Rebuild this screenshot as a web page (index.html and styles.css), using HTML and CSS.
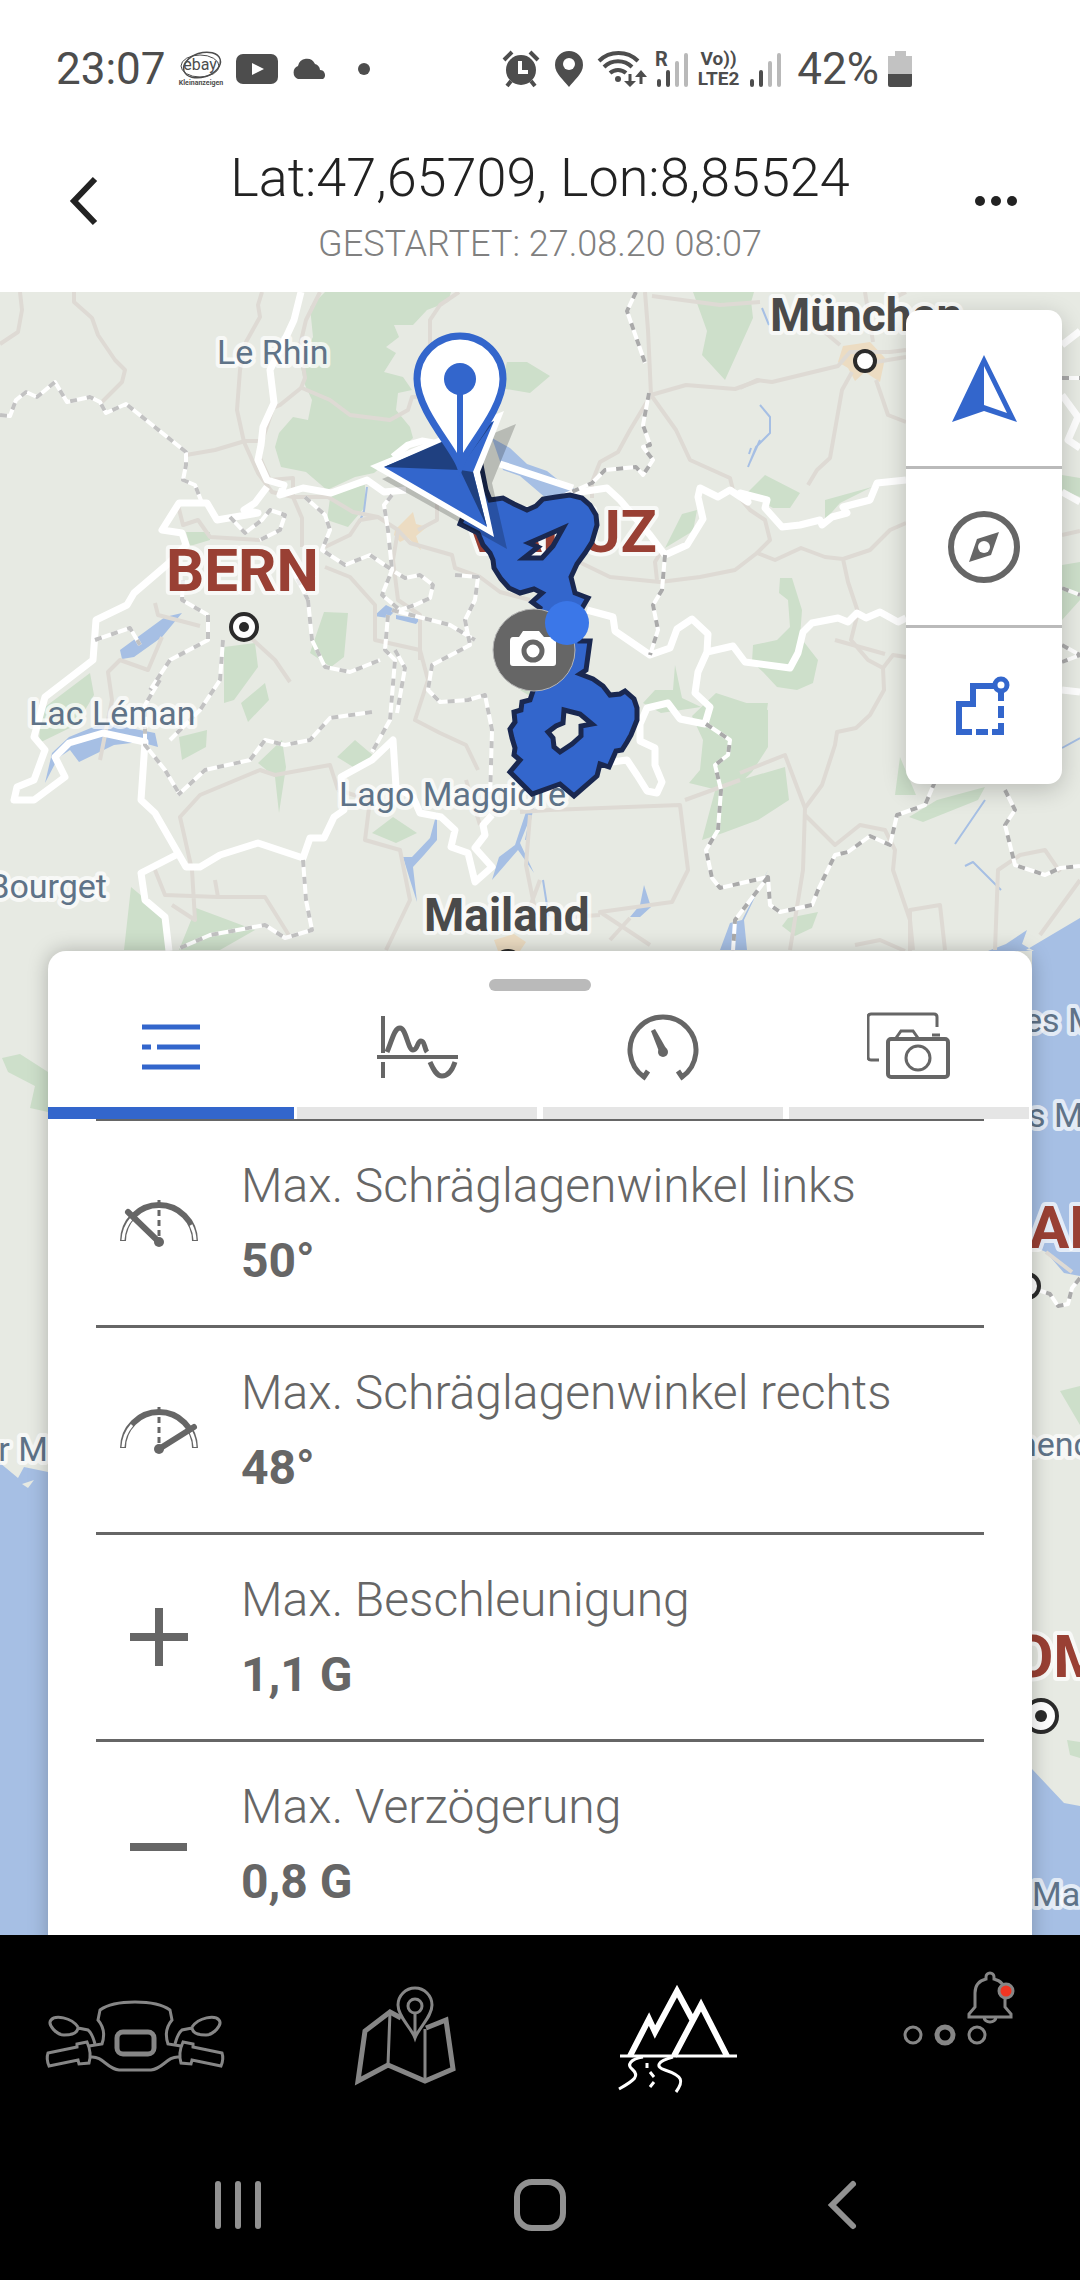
FILE: index.html
```html
<!DOCTYPE html>
<html lang="de">
<head>
<meta charset="UTF-8" />
<meta name="viewport" content="width=device-width, initial-scale=1" />
<title>Aufgezeichnete Tour</title>
<link rel="stylesheet" href="styles.css">
</head>
<body>

  <!-- Statusleiste -->
  <div class="status-bar">
    <div class="status-left">
      <span class="status-text">23:07</span>
      <svg class="ic-ebay" viewBox="0 0 44 36" width="44" height="36">
        <ellipse cx="23" cy="14" rx="19" ry="12" transform="rotate(-18 23 14)" fill="none" stroke="#4d4d4d" stroke-width="1.5"/>
        <ellipse cx="21" cy="15" rx="19" ry="11" fill="none" stroke="#4d4d4d" stroke-width="1"/>
        <text x="21" y="19" text-anchor="middle" font-size="16">ebay</text>
        <text x="22" y="34" text-anchor="middle" font-size="7" font-weight="700">Kleinanzeigen</text>
      </svg>
      <svg viewBox="0 0 42 30" width="42" height="30">
        <rect width="42" height="30" rx="7" fill="#4d4d4d"/>
        <path d="M16 9l12 6-12 6z" fill="#fff"/>
      </svg>
      <svg class="ic-cloud" viewBox="0 0 38 22" width="38" height="22">
        <path d="M7 21a7 7 0 0 1 0-13A9 9 0 0 1 24 6a7 7 0 0 1 5 6 5 5 0 0 1 3 9z" fill="#4d4d4d"/>
      </svg>
      <span class="status-dot"></span>
    </div>
    <div class="status-right">
      <svg viewBox="0 0 38 38" width="38" height="38">
        <circle cx="19" cy="20" r="15" fill="#4d4d4d"/>
        <path d="M2 10l8-8M28 2l8 8M9 31l-4 5M29 31l4 5" stroke="#4d4d4d" stroke-width="4" fill="none"/>
        <path d="M18 11v11h8" stroke="#fff" stroke-width="4" fill="none"/>
      </svg>
      <svg class="ic-place" viewBox="0 0 28 38" width="28" height="38">
        <path d="M14 1A14 14 0 0 0 0 15c0 9 9 15 14 22 5-7 14-13 14-22A14 14 0 0 0 14 1z" fill="#4d4d4d"/>
        <circle cx="14" cy="14" r="6" fill="#fff"/>
      </svg>
      <svg class="ic-wifi" viewBox="0 0 48 38" width="48" height="38">
        <g fill="none" stroke="#4d4d4d" stroke-width="4">
          <path d="M1 11a28 28 0 0 1 39 0M6 17a20 20 0 0 1 28 0M12 23a12 12 0 0 1 16 0"/>
          <path d="M32 24v9M43 34v-9" stroke-width="3"/>
        </g>
        <circle cx="20" cy="29" r="3" fill="#4d4d4d"/>
        <path d="M26 31h12l-6 6zM37 27h12l-6-7z" fill="#4d4d4d"/>
      </svg>
      <svg class="ic-signal" viewBox="0 0 34 38" width="34" height="38">
        <text x="0" y="16" font-size="20" font-weight="700">R</text>
        <g stroke-width="4" stroke-linecap="round">
          <path d="M4 31v4M13 22v13" stroke="#4d4d4d"/>
          <path d="M22 13v22M31 5v30" stroke="#b9b9b9"/>
        </g>
      </svg>
      <span class="volte"><span>Vo))</span><span>LTE2</span></span>
      <svg class="ic-signal" viewBox="0 0 34 38" width="34" height="38">
        <g stroke-width="4" stroke-linecap="round">
          <path d="M4 31v4M13 22v13" stroke="#4d4d4d"/>
          <path d="M22 13v22M31 5v30" stroke="#b9b9b9"/>
        </g>
      </svg>
      <span class="status-text percent">42%</span>
      <svg viewBox="0 0 24 38" width="24" height="38">
        <path d="M7 1h11v5h6v19H0V6h7z" fill="#c2c2c2"/>
        <path d="M0 24h24v11q0 2-2 2H2q-2 0-2-2z" fill="#4d4d4d"/>
      </svg>
    </div>
  </div>

  <!-- Kopfzeile -->
  <header class="header">
    <button class="header-btn" aria-label="Zurück">
      <svg viewBox="0 0 30 50" width="30" height="50">
        <path d="M26 3L5 25l21 22" fill="none" stroke="#222" stroke-width="6"/>
      </svg>
    </button>
    <div class="header-text">
      <h1>Lat:47,65709, Lon:8,85524</h1>
      <p>GESTARTET: 27.08.20 08:07</p>
    </div>
    <button class="header-btn" aria-label="Mehr">
      <svg viewBox="0 0 44 12" width="44" height="12">
        <g fill="#222"><circle cx="6" cy="6" r="5"/><circle cx="22" cy="6" r="5"/><circle cx="38" cy="6" r="5"/></g>
      </svg>
    </button>
  </header>

  <main class="stage">
    <!-- Karte -->
    <svg class="map" viewBox="0 292 1080 1643" preserveAspectRatio="xMidYMin slice" role="img" aria-label="Karte mit Tour">
      <g class="forest">
        <path d="M325 292H451L448 302 427 310 413 325H394L399 337 386 347 396 353 384 372 403 377 412 390 398 393 396 410 410 427 413 438 393 457 374 473 355 477 327 490 306 472 281 467 275 447 279 433 293 417 308 420 312 400 305 385 300 363 313 337 310 307z"/>
        <path d="M331 491L365 485V507L348 527 327 520zM324 612L348 613 344 657 331 667 310 653zM224 647L255 643 258 667 234 700 224 703zM90 673L41 710 39 743 76 725 94 695zM265 683L241 703 248 722 269 700z"/>
        <path d="M207 730L179 737 182 760 206 747zM282 740L258 763 275 777 279 813 286 767zM355 740L375 757 358 770 337 757zM393 817L417 833 396 843 372 833zM131 887L162 913 169 950H124zM196 908L255 930 220 950H179zM186 532h24v8l-20 6z"/>
        <path d="M716 693L768 710V747L752 772 730 793 689 783 700 770 703 740 692 716zM785 767L789 800 758 820 723 833 702 840 716 787zM675 665L682 698 701 707 661 713 643 703 655 690 673 690z"/>
        <path d="M780 578H792L802 610 800 637 818 660 813 683 797 690 777 687 763 672 752 662 753 645 777 640 790 627 788 600 779 593zM765 475L800 493 790 508H773L747 493zM872 487L825 500V520L840 503zM740 703H768L763 737 740 760zM788 918L818 912 812 928 795 936 782 926z"/>
        <path d="M985 787L937 800 909 817 923 822 978 800zM900 757L916 795H895zM693 292H750L753 318 725 380 702 355 707 331zM507 362H527L550 376 530 393 500 388zM682 514L697 510 693 531 665 548zM740 292h14l-14 48zM1062 475L1080 478V497L1062 490zM1062 565L1080 562V600L1062 620z"/>
        <path d="M2 1058L20 1054 48 1072V1112L30 1108 35 1086 8 1072zM1060 1391L1080 1386V1425zM1067 1740L1080 1742V1758L1070 1755zM520 690l10-6v12z"/>
      </g>
      <g class="city-area">
        <path d="M843 346L870 342 885 358 880 382 865 372 855 381 848 368 838 362zM395 530l18-18 3 12 11 3-11 9 5 14-13-12-8 4-6-7zM494 940l20-6 12 8-6 9h-22z"/>
      </g>
      <g class="water">
        <path d="M45 783L52 753 69 737 103 723 130 728 155 733 158 747 140 742 114 745 79 762 70 750 58 758zM182 613L165 617 120 650 122 659 134 657 162 637zM492 438L510 448 527 464 547 471 562 483 585 494 547 499 520 476 503 470z"/>
        <path d="M437 812V840L424 855 413 867 417 902 410 880 403 857 412 857 430 838zM534 808L520 843 534 873 518 850 492 880 499 857 515 845 526 812zM768 870L744 920 747 950H720L730 923 742 920zM644 885L651 907 640 917H630L640 905z"/>
        <path d="M386 605l10 5-8 8-14-2zM396 615l24 4-4 5-20-5zM418 624l4 3-2 16z"/>
        <path d="M1080 918L1026 950 1032 951V1246L1046 1252 1064 1273 1080 1276zM988 951L1006 944 1027 930 1022 944 1034 951zM0 1463L18 1478 24 1467 48 1472V1935H0zM1032 1769L1064 1803 1080 1806V1935H1032z"/>
      </g>
      <path d="M22 1484l12-4-6 8z" fill="#e7eae3"/>
      <g class="stream">
        <path d="M762 308l7 17M760 405l10 12v16l-14 14-8 20M751 448l-2 6M532 810l-6 30M367 487l-3 24-5 12M760 440l-10 22M543 880l6 38M1062 748l18-10M985 800l-30 44M965 866l8-4 28 28"/>
      </g>
      <g class="road">
        <path d="M20 292L22 310 18 332 0 344M74 292V302L92 318 98 335 115 360 125 370 122 382 101 403M262 292L258 305 260 317 246 342 240 370 237 410 244 442 258 473 272 492 293 497 302 518V547"/>
        <path d="M320 292L306 320 300 345 305 378 301 388 280 405 273 408 262 441 245 441 215 450 186 455M262 441L260 458 270 480 293 478V497L328 497 353 512 378 517 398 530 410 543 452 555 455 568 480 577 500 592 530 600"/>
        <path d="M302 388L330 400 350 415 390 420 408 410 412 397 425 396M459 292L440 305 430 320V360M437 500V520L418 530M378 517L360 520 350 535 325 547M325 567L350 577 375 605V640L420 650 428 680 415 720 440 733 466 745 478 770M398 530L393 560 398 600 420 615V660"/>
        <path d="M178 505L183 525 198 520 210 537 260 540M155 603L158 615 200 626M240 628L275 660 290 682M162 637L148 670 120 660 108 672 112 700 100 760M172 905L195 920 192 870 180 817 200 795 260 770 275 775 330 765 338 790M155 870L165 895 218 897 215 880M218 897L265 897 290 937M338 790L370 800 365 840 400 850 410 900 386 950"/>
        <path d="M645 292L648 330 651 395 630 430 618 452 600 462 592 482V498M651 395L686 385 735 389 760 380M651 395L676 430 690 460 730 478 733 490 750 510 765 520 770 540 757 553 775 560 801 548 825 557 843 559 870 550 890 530 906 523M843 559L848 582 858 612 851 640 868 660 883 668 884 690 870 715 856 728 837 732 835 745 822 785 805 808"/>
        <path d="M883 668L893 655 906 657M757 553L735 570 700 577 660 582 610 577 575 560M657 580L655 562 662 550M740 388L757 380 772 382 838 366 850 352 890 352 906 350M852 372L842 390 830 458 817 470 808 485M876 380L888 415 906 422M822 330L840 345M865 292L873 342M906 357L870 363M652 296L720 305 760 302M906 292l-12 6"/>
        <path d="M740 773L785 755 805 808 803 870 790 950M685 800L740 780M520 812L550 810 680 805 688 870 672 902 600 912 650 945M805 815L835 845 860 825 885 830 895 850 893 870 910 920 913 950M910 951V910L940 905 945 950M995 950L998 870 1020 855 1045 850 1060 872M1040 935L1080 880M855 945L880 940 905 951M835 640l50 14M1062 535l18-4M1046 1252l26 20M480 825L466 780M610 940l20-22M540 880L525 920 600 915M530 815l-4 50 10 50"/>
      </g>
      <g class="border">
        <path d="M301 292L294 320 288 333 270 370 274 403 263 427 261 445 258 460 267 480 284 485 280 495 303 488 331 493 367 480 384 492 406 490 M267 487L255 503 244 510 258 513 217 520 207 503H179L162 530 182 533 186 545 169 563 134 593 127 605 96 620 93 660 45 697 34 737 45 750 34 780 17 787 14 800 34 800 65 777 55 757 69 743 103 733 145 742 141 800 155 813 186 867H200L220 855 258 843 303 858 310 838H324L334 817 344 810 341 777 372 760 393 740 396 787 413 797 420 813 441 817 455 830 451 847 468 853 475 882 492 867 475 848 485 835 483 825 492 815M176 855L141 873 145 900 165 917 169 951"/>
        <path d="M393 457L408 445 422 441 445 445M500 464L573 488M573 493L607 488 620 500 650 535 665 555 687 545 703 519 698 497 700 488 718 497 730 490 748 502 740 493 767 500 765 508 782 527 800 525 820 520 822 525 832 517 847 513 843 507 870 500 877 483 906 480"/>
        <path d="M587 610L613 617 615 631 650 655 670 648 677 629 692 619 708 634 707 652 698 672 695 693 710 707 705 724 680 719 668 703 647 708 640 724V741L655 748V765L662 782 657 793 647 791 637 775 627 760 612 762M707 652L733 646 745 662 790 668 798 653 803 632 812 623 838 618 848 622 857 613 866 618 880 612 898 622 906 618M1062 345l18-14M1062 395L1078 417 1068 440 1080 448M1062 492L1080 502M1062 690L1080 692"/>
      </g>
      <path id="bezirke" class="dash-base" d="M0 415L10 416 16 400 26 392 37 397 55 382 67 402 90 397 100 402 106 413 126 404 186 452V465L183 480 195 485 202 503M392 495L384 505 388 530 392 570 382 595 400 610 415 605 430 598 433 585 420 575 405 578 395 572M305 497L325 515 330 530 322 550 345 565 370 555 392 570M230 517L245 533 262 520 270 510 285 515 280 530 260 540M455 575L478 577 475 600 465 620 470 645 432 665 428 690 440 702 468 700 485 695 492 730 490 800M388 615L385 650 395 660 390 720 372 752M308 600L312 640 325 667 350 672 380 660M308 600l-15-30M392 610L450 625 475 640M395 650l10 18-8 45M372 712L330 718 310 740 285 745 265 740 250 760 205 770 178 795M208 615V640L170 660 150 690M160 680L145 705 145 745 165 770 180 795M303 860L306 900 312 930 285 938 265 925 210 935 180 948M223 640L220 680 200 710 170 740M183 580L182 600 208 615M95 640L130 628 140 645"/>
      <path class="dash-mark" d="M0 415L10 416 16 400 26 392 37 397 55 382 67 402 90 397 100 402 106 413 126 404 186 452V465L183 480 195 485 202 503M392 495L384 505 388 530 392 570 382 595 400 610 415 605 430 598 433 585 420 575 405 578 395 572M305 497L325 515 330 530 322 550 345 565 370 555 392 570M230 517L245 533 262 520 270 510 285 515 280 530 260 540M455 575L478 577 475 600 465 620 470 645 432 665 428 690 440 702 468 700 485 695 492 730 490 800M388 615L385 650 395 660 390 720 372 752M308 600L312 640 325 667 350 672 380 660M308 600l-15-30M392 610L450 625 475 640M395 650l10 18-8 45M372 712L330 718 310 740 285 745 265 740 250 760 205 770 178 795M208 615V640L170 660 150 690M160 680L145 705 145 745 165 770 180 795M303 860L306 900 312 930 285 938 265 925 210 935 180 948M223 640L220 680 200 710 170 740M183 580L182 600 208 615M95 640L130 628 140 645"/>
      <path class="dash-base" d="M636 292L627 311 645 363M649 393L643 425 650 445 643 447 653 460 643 475 636 467 605 470 592 483 560 497M665 555L662 590 653 605 658 630 650 655M706 724L730 740 728 755 715 765 721 790 718 830 706 850 712 878 720 888 768 877 770 905 780 912 812 905 818 890 835 855 848 852 870 836 890 845 897 815 925 805 934 784 930 770M768 877L735 920 733 951M1005 790L1015 810 1005 825 1015 865 1045 875 1060 868 1080 866M1062 588L1080 595M1062 645L1080 655 1062 662M1062 378h18M1080 1278l-8 10-4 16-10 2-8-12-12-4"/>
      <path class="dash-mark dark" d="M636 292L627 311 645 363M649 393L643 425 650 445 643 447 653 460 643 475 636 467 605 470 592 483 560 497M665 555L662 590 653 605 658 630 650 655M706 724L730 740 728 755 715 765 721 790 718 830 706 850 712 878 720 888 768 877 770 905 780 912 812 905 818 890 835 855 848 852 870 836 890 845 897 815 925 805 934 784 930 770M768 877L735 920 733 951M1005 790L1015 810 1005 825 1015 865 1045 875 1060 868 1080 866M1062 588L1080 595M1062 645L1080 655 1062 662M1062 378h18M1080 1278l-8 10-4 16-10 2-8-12-12-4"/>

      <!-- Beschriftung -->
      <g class="label-water">
        <text x="217" y="364">Le Rhin</text>
        <text x="29" y="725">Lac Léman</text>
        <text x="339" y="806">Lago Maggiore</text>
        <text x="107" y="898" text-anchor="end">Bourget</text>
        <text x="48" y="1461" text-anchor="end">r M</text>
        <text x="1024" y="1032">es M</text>
        <text x="1028" y="1127">s M</text>
        <text x="1018" y="1456">henc</text>
        <text x="1032" y="1906">Ma</text>
      </g>
      <g class="label-city">
        <text x="770" y="331">München</text>
        <text x="424" y="931">Mailand</text>
      </g>
      <g class="label-capital">
        <text x="166" y="591">BERN</text>
        <text x="657" y="552" text-anchor="end">VADUZ</text>
        <text x="1029" y="1248">AN</text>
        <text x="1012" y="1677">OM</text>
      </g>
      <g class="town">
        <circle cx="244" cy="627" r="13"/><circle cx="865" cy="361" r="10"/><circle cx="508" cy="964" r="13"/>
        <circle cx="1027" cy="1286" r="12"/><circle cx="1041" cy="1716" r="16"/>
      </g>
      <circle cx="244" cy="627" r="5" fill="#2b2b2b"/>
      <circle cx="1041" cy="1716" r="6" fill="#2b2b2b"/>

      <!-- Tour -->
      <path class="track" d="M482 470L486 490 490 500 503 498 514 504 527 510 536 506 543 499 556 497 570 495 582 498 590 505 596 515 597 525 592 542 585 553 577 564 571 577 575 593 588 598 581 610 580 641 590 641 586 670 580 674 593 679 603 686 610 695 620 694 625 691 634 699 637 708 637 720 631 735 627 742 622 750 616 751 609 767 600 764 597 776 574 796 560 784 532 794 510 772 520 760 514 755 515 748 512 738 510 729 515 722 514 712 521 710 522 702 530 700 533 691 527 651 540 608 532 602 542 593 534 589 520 593 509 588 501 579 494 568 493 560 490 553 483 545 478 533 460 524zM524 558L538 547 529 543 545 536 563 528 553 546 542 558zM564 710L580 714 592 724 581 726V736L572 744 560 752 554 747 553 738 548 732 556 726 563 723z"/>

      <!-- Aktuelle Position -->
      <path d="M382 479L516 424 492 483 507 549z" fill="#000" opacity=".2"/>
      <path d="M370 466L504 411 480 472 494 537z" fill="#fff"/>
      <path d="M384 467L494 421 473 472 487 527z" fill="#3366cc"/>
      <path d="M384 467L446 440 460 470zM460 470L473 472 487 527zM494 421L486 428 462 465z" fill="#1f4080"/>
      <path d="M460 466C453 447 417 410 417 379A43 43 0 0 1 503 379C503 410 467 447 460 466z" fill="#fff" stroke="#3366cc" stroke-width="7"/>
      <path d="M460 379v86" stroke="#3366cc" stroke-width="6"/>
      <circle cx="460" cy="379" r="16" fill="#3366cc"/>

      <!-- Foto -->
      <circle cx="534" cy="650" r="41" fill="#666" stroke="#b5b5b5" stroke-width="1"/>
      <path d="M513 637h6l4-6h16l5 6h8q4 0 4 4v22q0 3-3 3h-40q-3 0-3-3v-22q0-4 3-4z" fill="#fff"/>
      <circle cx="533" cy="651" r="9" fill="#fff" stroke="#666" stroke-width="5"/>
      <circle cx="567" cy="623" r="22" fill="#3b77e8"/>
    </svg>

    <div class="controls">
      <button aria-label="Position">
        <svg class="icon" viewBox="0 0 84 84">
          <path fill-rule="evenodd" d="M42 9L75 76 42 65 10 76zM42 20V59L65 67z" fill="#3366cc"/>
        </svg>
      </button>
      <button aria-label="Kompass">
        <svg class="icon" viewBox="0 0 84 84">
          <circle cx="42" cy="42" r="33" fill="none" stroke="#666" stroke-width="6"/>
          <path d="M57 27L49 50 27 57 35 34z" fill="#666"/>
          <circle cx="42" cy="42" r="6" fill="#fff"/>
        </svg>
      </button>
      <button aria-label="Route">
        <svg class="icon" viewBox="0 0 84 84" fill="none" stroke="#3366cc" stroke-width="6">
          <path d="M53 22H31V40H17V68H30M34 68H46M50 68H59V59M59 54V42M59 37V28"/>
          <circle cx="59" cy="21" r="6" stroke-width="5"/>
        </svg>
      </button>
    </div>

    <section class="sheet">
      <div class="handle"></div>
      <div class="tabs" role="tablist">
        <button class="tab active" role="tab" aria-selected="true" aria-label="Liste">
          <svg class="icon" viewBox="0 0 84 84" fill="none" stroke="#3366cc" stroke-width="5">
            <path d="M13 22H71M13 42H22M28 42H71M13 62H71"/>
          </svg>
        </button>
        <button class="tab" role="tab" aria-selected="false" aria-label="Verlauf">
          <svg class="icon" viewBox="0 0 84 84" fill="none" stroke="#666">
            <path d="M8 11V48M8 57V73M2 52H83" stroke-width="4"/>
            <path d="M12 47C17 36 19 23 25 23S33 45 38 45 42 36 46 36 49 43 52 47M55 57C59 66 62 71 67 71S77 66 80 57" stroke-width="5"/>
          </svg>
        </button>
        <button class="tab" role="tab" aria-selected="false" aria-label="Instrumente">
          <svg class="icon" viewBox="0 0 84 84" fill="none" stroke="#666">
            <path d="M27 66L23 72A33 33 0 1 1 61 72L57 66" stroke-width="5"/>
            <path d="M30 26L34 24 46 45 39 49z" fill="#666" stroke="none"/>
            <circle cx="42" cy="47" r="5" fill="#666" stroke="none"/>
          </svg>
        </button>
        <button class="tab" role="tab" aria-selected="false" aria-label="Fotos">
          <svg class="icon" viewBox="0 0 84 84" fill="none" stroke="#666">
            <path d="M12 55H4Q1 55 1 52V12Q1 9 4 9H67Q70 9 70 12V22" stroke-width="3"/>
            <rect x="21" y="34" width="60" height="38" rx="3" stroke-width="4"/>
            <path d="M29 33L34 26H46L51 33M65 30H73" stroke-width="3"/>
            <circle cx="51" cy="53" r="12" stroke-width="3"/>
          </svg>
        </button>
      </div>

      <ul class="stats">
        <li>
          <svg class="icon" viewBox="0 0 84 84" fill="none" stroke="#666">
            <path d="M6 60A36 36 0 0 1 78 60" stroke-width="6"/>
            <path d="M6 59A36 36 0 0 1 15 37M74 44A36 36 0 0 1 78 59" stroke="#fff" stroke-width="3"/>
            <path d="M42 19V58" stroke-width="3" stroke-dasharray="6 4"/>
            <path d="M42 61L11 31" stroke-width="6" stroke-linecap="round"/>
            <circle cx="42" cy="61" r="5" fill="#666" stroke="none"/>
          </svg>
          <div><span>Max. Schräglagenwinkel links</span><strong>50°</strong></div>
        </li>
        <li>
          <svg class="icon" viewBox="0 0 84 84" fill="none" stroke="#666">
            <path d="M6 60A36 36 0 0 1 78 60" stroke-width="6"/>
            <path d="M6 59A36 36 0 0 1 15 37M74 44A36 36 0 0 1 78 59" stroke="#fff" stroke-width="3"/>
            <path d="M42 19V58" stroke-width="3" stroke-dasharray="6 4"/>
            <path d="M42 61L77 39" stroke-width="6" stroke-linecap="round"/>
            <circle cx="42" cy="61" r="5" fill="#666" stroke="none"/>
          </svg>
          <div><span>Max. Schräglagenwinkel rechts</span><strong>48°</strong></div>
        </li>
        <li>
          <svg class="icon" viewBox="0 0 84 84"><path d="M13 42H71M42 13V71" stroke="#666" stroke-width="8"/></svg>
          <div><span>Max. Beschleunigung</span><strong>1,1 G</strong></div>
        </li>
        <li>
          <svg class="icon" viewBox="0 0 84 84"><path d="M13 45H70" stroke="#666" stroke-width="8"/></svg>
          <div><span>Max. Verzögerung</span><strong>0,8 G</strong></div>
        </li>
      </ul>
    </section>
  </main>

  <!-- Hauptnavigation -->
  <nav class="main-nav">
    <a href="#fahrzeug" aria-label="Fahrzeug">
      <svg viewBox="0 0 180 120" width="180" height="120" fill="none" stroke="#868686" stroke-width="3">
        <g>
          <path d="M90 27Q66 27 55 35L53 45C59 52 60 60 57 69L44 71"/>
          <path d="M33 52C26 42 10 40 6 45S12 60 19 60 33 58 33 52M33 53L43 55Q47 58 50 69"/>
          <path d="M3 78L32 72V69L42 67Q47 78 44 88L34 89 33 85 4 91Q1 84 3 78zM46 82C58 81 62 94 74 95H90"/>
        </g>
        <g transform="translate(180 0) scale(-1 1)">
          <path d="M90 27Q66 27 55 35L53 45C59 52 60 60 57 69L44 71"/>
          <path d="M33 52C26 42 10 40 6 45S12 60 19 60 33 58 33 52M33 53L43 55Q47 58 50 69"/>
          <path d="M3 78L32 72V69L42 67Q47 78 44 88L34 89 33 85 4 91Q1 84 3 78zM46 82C58 81 62 94 74 95H90"/>
        </g>
        <rect x="72" y="57" width="37" height="22" rx="6" stroke-width="5"/>
      </svg>
    </a>
    <a href="#navigation" aria-label="Navigation">
      <svg viewBox="0 0 180 120" width="180" height="120" fill="none" stroke="#868686">
        <path d="M86 43L75 37 50 56 43 106 73 90 110 106 138 94 131 45 111 53" stroke-width="5"/>
        <path d="M75 37L73 90M110 54V106" stroke-width="3"/>
        <path d="M100 63C96 52 83 42 83 30A17 17 0 0 1 117 30C117 42 104 52 100 63zM100 38V62" stroke-width="3"/>
        <circle cx="100" cy="31" r="7" stroke-width="3"/>
      </svg>
    </a>
    <a href="#touren" aria-label="Touren" aria-current="page">
      <svg viewBox="0 0 180 120" width="180" height="120" fill="none" stroke="#fff">
        <path d="M45 81L64 44 70 57 92 16 107 44M89 81L116 30 142 81" stroke-width="6"/>
        <path d="M35 81H152" stroke-width="3"/>
        <path d="M58 82C45 84 42 90 47 94C55 101 50 105 34 114M88 82C72 86 70 92 80 95C98 101 99 106 91 117M62 88V93M65 97L69 102M69 107L65 112" stroke-width="3"/>
      </svg>
    </a>
    <a href="#mehr" aria-label="Mehr">
      <svg viewBox="0 0 180 120" width="180" height="120" fill="none" stroke="#868686" stroke-width="3">
        <circle cx="58" cy="60" r="8"/><circle cx="90" cy="60" r="8" stroke-width="5"/><circle cx="122" cy="60" r="8"/>
        <path d="M131 4V2a4 4 0 0 1 8 0V4C147 6 150 12 150 18V32L156 39V42H114V39L120 32V18C120 12 123 6 131 4zM129 42A6 5 0 0 0 141 42"/>
        <circle cx="151" cy="16" r="7" fill="#f03522"/>
      </svg>
    </a>
  </nav>

  <!-- Systemleiste -->
  <div class="system-bar">
    <button aria-label="Letzte Apps">
      <svg viewBox="0 0 56 56" width="56" height="56"><path d="M8 7V49M28 7V49M48 7V49" stroke="#919191" stroke-width="6" stroke-linecap="round"/></svg>
    </button>
    <button aria-label="Startseite">
      <svg viewBox="0 0 56 56" width="56" height="56"><rect x="5" y="5" width="46" height="46" rx="15" fill="none" stroke="#919191" stroke-width="6"/></svg>
    </button>
    <button aria-label="Zurück">
      <svg viewBox="0 0 56 56" width="56" height="56"><path d="M39 7L18 28 39 49" fill="none" stroke="#919191" stroke-width="6" stroke-linecap="round"/></svg>
    </button>
  </div>

</body>
</html>
```
FILE: styles.css
```css
:root {
  --blau: #3366cc;
  --grau: #666;
  --status: #4d4d4d;
}

* {
  margin: 0;
  padding: 0;
  box-sizing: border-box;
  font-family: Roboto, "Liberation Sans", sans-serif;
}

body {
  height: 100vh;
  display: flex;
  flex-direction: column;
  background-color: #fff;
  color: var(--grau);
  overflow: hidden;
}

button {
  background: none;
  border: none;
  cursor: pointer;
}

svg {
  display: block;
  flex-shrink: 0;
}

.icon {
  width: 84px;
  height: 84px;
}

/* Statusleiste */
.status-bar {
  height: 110px;
  padding: 28px 168px 0 56px;
  display: flex;
  align-items: center;
  justify-content: space-between;
  color: var(--status);
}

.status-bar svg {
  overflow: visible;
}

.status-left,
.status-right {
  display: flex;
  align-items: center;
}

.status-left {
  gap: 13px;
}

.status-right {
  gap: 9px;
}

.status-bar text {
  fill: var(--status);
}

.status-text {
  font-size: 44px;
  line-height: 52px;
}

.status-dot {
  width: 12px;
  height: 12px;
  margin-left: 16px;
  border-radius: 50%;
  background-color: var(--status);
}

.ic-place {
  margin: 0 6px;
}

.volte {
  display: flex;
  flex-direction: column;
  align-items: center;
  font-size: 19px;
  font-weight: 700;
  line-height: 20px;
}

.percent {
  margin-left: 6px;
}

/* Kopfzeile */
.header {
  height: 182px;
  padding: 0 54px;
  display: flex;
  align-items: center;
  justify-content: space-between;
}

.header-btn {
  width: 60px;
  height: 96px;
  display: flex;
  align-items: center;
  justify-content: center;
}

.header-text {
  padding-top: 12px;
  text-align: center;
}

.header-text h1 {
  color: #222;
  font-size: 54px;
  font-weight: 300;
  line-height: 60px;
}

.header-text p {
  margin-top: 14px;
  color: #808080;
  font-size: 36px;
  font-weight: 300;
  line-height: 44px;
}

/* Karte */
.stage {
  flex: 1;
  min-height: 0;
  position: relative;
  overflow: hidden;
}

.map {
  position: absolute;
  top: 0;
  left: 0;
  width: 100%;
  height: 100%;
  background-color: #e7eae3;
}

.forest { fill: #cddfca; }
.city-area { fill: #ecdcc2; }
.water { fill: #a6bfe4; }

.stream,
.road,
.border,
.dash-base,
.dash-mark {
  fill: none;
  stroke-linejoin: round;
}

.stream { stroke: #a6bfe4; stroke-width: 2; }
.road { stroke: #dedad4; stroke-width: 4; }
.border { stroke: #fff; stroke-width: 7; }
.dash-base { stroke: #fff; stroke-width: 4; }
.dash-mark { stroke: #c2c2c2; stroke-width: 4; stroke-dasharray: 7 10; }
.dash-mark.dark { stroke: #aaa; }

.label-water,
.label-city,
.label-capital {
  paint-order: stroke;
  stroke: rgba(255, 255, 255, 0.7);
  stroke-width: 8px;
  stroke-linejoin: round;
}

.label-water {
  fill: #5f7388;
  font-size: 34px;
}

.label-city {
  fill: #4a4a4a;
  font-size: 46px;
  font-weight: 700;
}

.label-capital {
  fill: #994034;
  font-size: 60px;
  font-weight: 700;
}

.town {
  fill: #fff;
  stroke: #2b2b2b;
  stroke-width: 4;
}

.track {
  fill: #3366cc;
  fill-rule: evenodd;
  stroke: #1a2850;
  stroke-width: 5;
}

/* Kartenknöpfe */
.controls {
  position: relative;
  width: 156px;
  margin: 18px 18px 0 auto;
  border-radius: 14px;
  background-color: #fff;
  box-shadow: 0 6px 24px rgba(0, 0, 0, 0.2);
}

.controls button {
  width: 100%;
  height: 156px;
  display: flex;
  align-items: center;
  justify-content: center;
}

.controls button + button {
  height: 159px;
  border-top: 3px solid #bababa;
}

/* Infobereich */
.sheet {
  position: relative;
  margin: 167px 48px 0;
  padding-top: 28px;
  border-radius: 18px 18px 0 0;
  background-color: #fff;
  box-shadow: 0 0 20px rgba(0, 0, 0, 0.25);
}

.handle {
  width: 102px;
  height: 12px;
  margin: 0 auto;
  border-radius: 6px;
  background-color: #bababa;
}

.tabs {
  display: grid;
  grid-template-columns: repeat(4, 1fr);
}

.tab {
  padding-top: 14px;
  display: flex;
  flex-direction: column;
  align-items: center;
  gap: 18px;
}

.tab::after {
  content: "";
  align-self: stretch;
  height: 12px;
  margin: 0 3px;
  background-color: #e5e5e5;
}

.tab.active::after {
  margin: 0;
  background-color: var(--blau);
}

.stats {
  margin: 0 48px;
  border-top: 2px solid var(--grau);
  list-style: none;
}

.stats li {
  height: 207px;
  padding-left: 21px;
  display: flex;
  align-items: center;
  gap: 40px;
  border-bottom: 3px solid var(--grau);
}

.stats div {
  display: flex;
  flex-direction: column;
  gap: 19px;
  font-size: 48px;
  line-height: 56px;
}

.stats span {
  font-weight: 300;
}

.stats strong {
  font-weight: 700;
}

/* Hauptnavigation */
.main-nav {
  height: 195px;
  padding-top: 40px;
  display: grid;
  grid-template-columns: repeat(4, 1fr);
  justify-items: center;
  align-items: start;
  background-color: #000;
}

.main-nav svg {
  overflow: visible;
}

/* Systemleiste */
.system-bar {
  height: 150px;
  padding: 0 87px;
  display: grid;
  grid-template-columns: repeat(3, 1fr);
  place-items: center;
  background-color: #000;
}
```
